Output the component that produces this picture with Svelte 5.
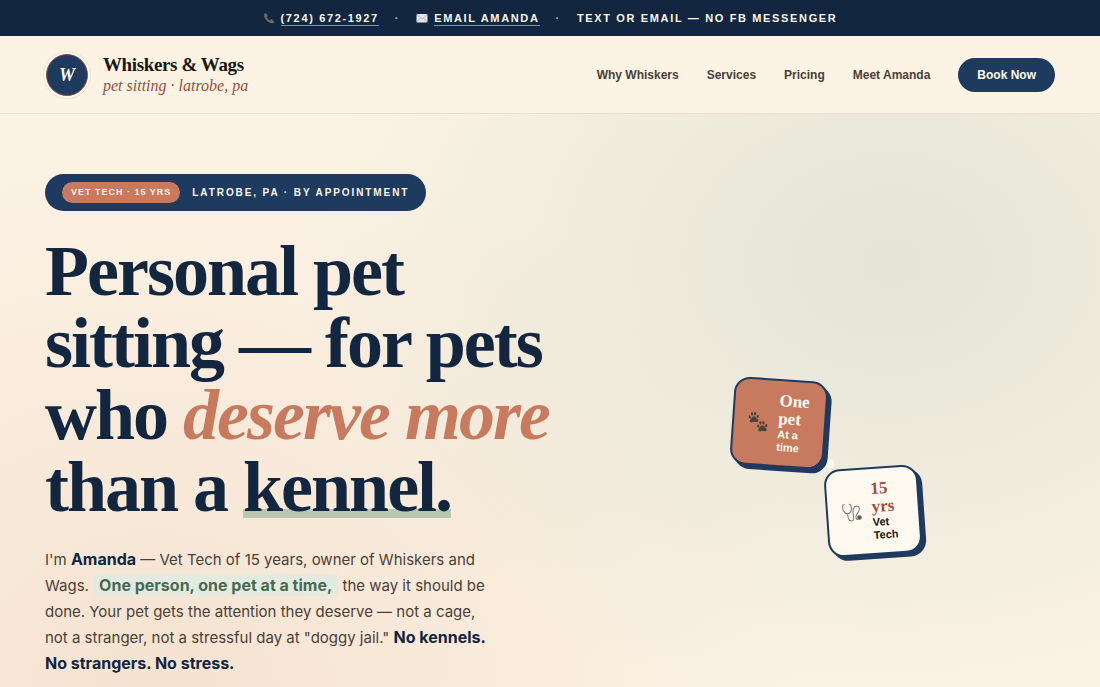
<script lang="ts">
  const navLinks = [
    { label: 'Why Whiskers', href: '#why' },
    { label: 'Services', href: '#services' },
    { label: 'Pricing', href: '#pricing' },
    { label: 'Meet Amanda', href: '#amanda' },
  ];

  const badges = [
    { title: 'One pet', text: 'At a time', icon: 'paws' },
    { title: '15 yrs', text: 'Vet Tech', icon: 'stethoscope' },
  ];
</script>

<div class="page">
  <div class="topbar">
    <span class="contact">
      <svg width="12" height="12" viewBox="0 0 24 24" fill="#66696d">
        <path d="M5 2 9 6c.8.9.6 2-.3 2.800L7.500 10c1.500 3 3.500 5 6.500 6.600l1.400-1.300c.8-.8 2-.8 2.800 0l4 3.500c.6.600.6 1.400 0 2C20 23 17 23 13.500 21.500 8 19 4 14.500 2.300 9.500 1.500 6.500 2.500 3.500 5 2z" />
      </svg>
      <a href="tel:7246721927">(724) 672-1927</a>
    </span>
    <span class="dot">·</span>
    <span class="contact">
      <svg width="12" height="12" viewBox="0 0 24 24">
        <rect x="1" y="4" width="22" height="17" rx="2" fill="#e4e7ea" />
        <path d="M2 6l10 8 10-8M2 20l7-8M22 20l-7-8" fill="none" stroke="#a4aab0" stroke-width="1.500" />
      </svg>
      <a href="#email">Email Amanda</a>
    </span>
    <span class="dot">·</span>
    <span>Text or Email — No FB Messenger</span>
  </div>

  <header>
    <a class="brand" href="#home">
      <span class="logo">W</span>
      <span class="brand-text">
        <span class="name">Whiskers &amp; Wags</span>
        <span class="tagline">pet sitting · latrobe, pa</span>
      </span>
    </a>
    <nav>
      {#each navLinks as link}
        <a href={link.href}>{link.label}</a>
      {/each}
      <a class="book" href="#book">Book Now</a>
    </nav>
  </header>

  <main class="hero">
    <div class="copy">
      <div class="pill">
        <span class="tag">Vet Tech · 15 yrs</span>
        <span>Latrobe, PA · By Appointment</span>
      </div>
      <h1>Personal pet sitting — for pets who <em>deserve more</em> than a <span class="underlined">kennel.</span></h1>
      <p>
        I'm <strong>Amanda</strong> — Vet Tech of 15 years, owner of Whiskers and Wags.
        <mark>One person, one pet at a time,</mark> the way it should be done. Your pet gets the
        attention they deserve — not a cage, not a stranger, not a stressful day at "doggy jail."
        <strong>No kennels. No strangers. No stress.</strong>
      </p>
    </div>

    <div class="visual">
      <div class="badges">
        {#each badges as badge}
          <div class="badge {badge.icon}">
            {#if badge.icon === 'paws'}
              <svg width="20" height="20" viewBox="0 0 40 40" fill="#4a4240">
                {#each [[11, 12], [29, 29]] as [x, y]}
                  <g transform="translate({x} {y}) rotate(-8)">
                    <path d="M0-2C4-2 4 2 7 4c3 3 1 6-2 6-2 0-3-1-5-1s-3 1-5 1c-3 0-5-3-2-6 3-2 3-6 7-6z" />
                    <ellipse cx="-8" cy="-1" rx="2.200" ry="3.200" transform="rotate(-25 -8 -1)" />
                    <ellipse cx="-3" cy="-7" rx="2.200" ry="3.600" />
                    <ellipse cx="3" cy="-7" rx="2.200" ry="3.600" />
                    <ellipse cx="8" cy="-1" rx="2.200" ry="3.200" transform="rotate(25 8 -1)" />
                  </g>
                {/each}
              </svg>
            {:else}
              <svg width="20" height="20" viewBox="0 0 40 40" fill="none" stroke="#77777a" stroke-width="2">
                <path d="M6 3 3 4C0 12 4 22 11 22s10-9 7-18l-3-1" />
                <path d="M11 22c0 8 2 15 7 15 9 0 1-15 5-24 2-7 10-7 12-1 2 7-8 11-8 18" />
                <path d="M27 30c0 3 1 5 4 5" />
                <circle cx="34" cy="31" r="4" fill="#4b4b4e" stroke="#99999c" />
              </svg>
            {/if}
            <div>
              <div class="badge-title">{badge.title}</div>
              <div class="badge-text">{badge.text}</div>
            </div>
          </div>
        {/each}
      </div>
    </div>
  </main>
</div>

<style>
  :global(body) {
    background: #fcf3e5;
  }

  .page {
    --navy: #1f3a5f;
    --navy-deep: #12263f;
    --clay: #c87a5e;
    --rust: #9a4e3d;
    --cream: #fcf3e5;
    --sans: 'Liberation Sans', Arial, sans-serif;
    --serif: 'Liberation Serif', 'Times New Roman', serif;
    display: flex;
    flex-direction: column;
    min-height: 100vh;
    font-family: var(--sans);
    color: #4a4036;
  }

  a {
    color: inherit;
    text-decoration: none;
  }

  .topbar {
    display: flex;
    justify-content: center;
    align-items: center;
    gap: 16px;
    padding: 10px 24px;
    background: var(--navy-deep);
    color: #fbf5ea;
    font-size: 11px;
    font-weight: 700;
    line-height: 16px;
    letter-spacing: 0.15em;
    text-transform: uppercase;
  }

  .contact {
    display: flex;
    align-items: center;
    gap: 6px;
  }

  .contact a {
    line-height: 14px;
    border-bottom: 1px solid var(--clay);
  }

  .dot {
    opacity: 0.7;
  }

  header {
    display: flex;
    justify-content: space-between;
    align-items: center;
    padding: 17px 45px 16px;
    background: var(--cream);
    border-bottom: 1px solid #e6ddcf;
  }

  .brand {
    display: flex;
    align-items: center;
    gap: 14px;
  }

  .logo {
    display: grid;
    place-items: center;
    width: 40px;
    height: 40px;
    margin: 1px;
    border: 1px solid var(--rust);
    border-radius: 50%;
    background: var(--navy);
    box-shadow: 0 0 0 2px #fffaf0, 0 0 0 3px #eee3d6;
    color: #fffaf0;
    font: italic 700 18px/1 var(--serif);
  }

  .brand-text {
    display: flex;
    flex-direction: column;
  }

  .name {
    color: #1a1611;
    font: 700 19px/22px var(--serif);
    letter-spacing: -0.02em;
  }

  .tagline {
    color: var(--rust);
    font: italic 400 16px/20px 'Apple Chancery', 'Snell Roundhand', var(--serif);
  }

  nav {
    display: flex;
    align-items: center;
    gap: 28px;
    font-size: 12px;
    font-weight: 700;
  }

  .book {
    padding: 0 19px;
    border-radius: 999px;
    background: var(--navy);
    color: #fffaf0;
    line-height: 34px;
  }

  .hero {
    flex: 1;
    display: grid;
    grid-template-columns: 11fr 10fr;
    gap: 48px;
    padding: 60px 45px 8px;
    background:
      radial-gradient(ellipse 54% 80% at 81% 26%, rgba(184, 203, 188, 0.36), transparent),
      radial-gradient(ellipse 60% 100% at 14% 100%, rgba(228, 184, 156, 0.28), transparent),
      var(--cream);
  }

  .pill {
    display: inline-flex;
    align-items: center;
    gap: 12px;
    padding: 8px 17px;
    border-radius: 999px;
    background: var(--navy);
    color: #fbf5ea;
    font-size: 10px;
    font-weight: 700;
    line-height: 21px;
    letter-spacing: 0.19em;
    text-transform: uppercase;
  }

  .tag {
    padding: 0 9px;
    border-radius: 999px;
    background: var(--clay);
    font-size: 9px;
    letter-spacing: 1px;
  }

  h1 {
    margin: 24px 0 0;
    color: var(--navy-deep);
    font: 700 72px/72px var(--serif);
    letter-spacing: -2px;
  }

  h1 em {
    color: var(--clay);
  }

  .underlined {
    background: linear-gradient(#b9c6b1, #b9c6b1) 0 62px / 100% 9px no-repeat;
  }

  p {
    max-width: 456px;
    margin: 24px 0 0;
    font: 400 15px/26px Inter, sans-serif;
  }

  strong,
  mark {
    color: var(--navy-deep);
    font-size: 16px;
    font-weight: 700;
    line-height: 16px;
  }

  mark {
    padding: 1px 6px;
    border-radius: 3px;
    background: #e3ebe1;
    color: #476b51;
  }

  .visual {
    display: grid;
    place-items: center;
    padding-top: 80px;
  }

  .badges {
    display: grid;
    grid-template-columns: repeat(2, 94px);
    grid-auto-rows: 88px;
    background: radial-gradient(circle at 52% 48%, #fffaf0 4px, transparent 5px);
  }

  .badge {
    display: flex;
    align-items: center;
    justify-content: center;
    gap: 10px;
    border: 2px solid var(--navy);
    border-radius: 16px;
    box-shadow: 4px 4px 0 var(--navy);
    background: #fffaf0;
    color: #1a1611;
  }

  .badge > div {
    width: 32px;
  }

  .badge.paws {
    background: var(--clay);
    color: #fffaf0;
    transform: rotate(4deg);
  }

  .badge.stethoscope {
    grid-area: 2 / 2;
    transform: rotate(-4deg);
  }

  .badge-title {
    font: 700 17px/18px var(--serif);
  }

  .stethoscope .badge-title {
    color: var(--rust);
  }

  .badge-text {
    font-size: 11px;
    font-weight: 700;
    line-height: 13px;
  }

  @media (max-width: 860px) {
    .hero {
      grid-template-columns: 1fr;
    }

    nav a:not(.book) {
      display: none;
    }
  }
</style>
